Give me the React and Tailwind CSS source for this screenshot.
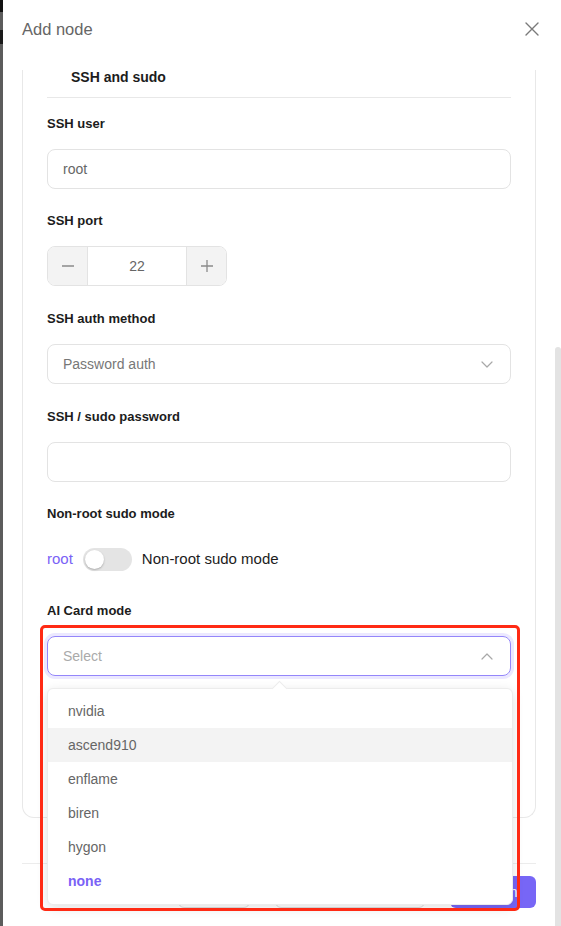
import React from "react";

const font = { fontFamily: '"Liberation Sans", Arial, sans-serif' };

function Label({ children }) {
  return (
    <div className="h-[20px] leading-[20px] text-[13px] font-bold text-[#1c1c1c]">{children}</div>
  );
}

function Field({ label, children, gap = "mb-[22px]" }) {
  return (
    <div className={gap}>
      <Label>{label}</Label>
      <div className="mt-[15px]">{children}</div>
    </div>
  );
}

function TextInput({ value, placeholder }) {
  return (
    <div className="h-[40px] w-full rounded-[8px] border border-[#e3e3e3] bg-white pl-[15px] flex items-center text-[14px]">
      {value ? (
        <span className="text-[#666]">{value}</span>
      ) : (
        <span className="text-[#aaa]">{placeholder}</span>
      )}
    </div>
  );
}

function Chevron({ up }) {
  return (
    <svg width="12" height="7" viewBox="0 0 12 7" fill="none">
      <path
        d={up ? "M1 6L6 1L11 6" : "M1 1L6 6L11 1"}
        stroke="#a8a8a8"
        strokeWidth="1.2"
        strokeLinecap="round"
        strokeLinejoin="round"
      />
    </svg>
  );
}

function NumberInput() {
  return (
    <div className="h-[40px] w-[180px] rounded-[8px] border border-[#e3e3e3] flex overflow-hidden">
      <div className="w-[40px] bg-[#f3f3f3] border-r border-[#e3e3e3] flex items-center justify-center">
        <svg width="14" height="14" viewBox="0 0 14 14">
          <path d="M1 7H13" stroke="#8a8a8a" strokeWidth="1.3" />
        </svg>
      </div>
      <div className="flex-1 flex items-center justify-center text-[14px] text-[#666]">22</div>
      <div className="w-[40px] bg-[#f3f3f3] border-l border-[#e3e3e3] flex items-center justify-center">
        <svg width="14" height="14" viewBox="0 0 14 14">
          <path d="M1 7H13M7 1V13" stroke="#8a8a8a" strokeWidth="1.3" />
        </svg>
      </div>
    </div>
  );
}

const options = ["nvidia", "ascend910", "enflame", "biren", "hygon", "none"];

export default function App() {
  return (
    <div className="w-[561px] h-[926px] relative overflow-hidden bg-white flex" style={font}>
      {/* dimmed backdrop edge */}
      <div className="w-[3px] h-full flex flex-col bg-[#5c5c5c]">
        <div className="h-[12px] bg-[#111]" />
        <div className="h-[18px]" />
        <div className="h-[14px] bg-[#1a1a1a]" />
        <div className="flex-1" />
      </div>

      {/* drawer */}
      <div className="flex-1 flex flex-col">
        <div className="h-[58px] flex items-center justify-between pl-[19px] pr-[22px]">
          <span className="text-[16.5px] text-[#666]">Add node</span>
          <svg width="14" height="14" viewBox="0 0 14 14">
            <path d="M1 1L13 13M13 1L1 13" stroke="#7a7a7a" strokeWidth="1.4" strokeLinecap="round" />
          </svg>
        </div>

        <div className="pl-[19px] pr-[25px] pt-[12px]">
          {/* form card */}
          <div className="border-x border-b border-[#e8e8e8] rounded-b-[12px] px-[24px] pb-[141px]">
            <div className="h-[14px] leading-[14px] pl-[24px] text-[14px] font-bold text-[#1c1c1c]">
              SSH and sudo
            </div>
            <div className="mt-[13px] border-t border-[#e8e8e8] mb-[16px]" />

            <Field label="SSH user">
              <TextInput value="root" />
            </Field>
            <Field label="SSH port" gap="mb-[23px]">
              <NumberInput />
            </Field>
            <Field label="SSH auth method" gap="mb-[23px]">
              <div className="h-[40px] w-full rounded-[8px] border border-[#e3e3e3] pl-[15px] pr-[17px] flex items-center justify-between text-[14px]">
                <span className="text-[#777]">Password auth</span>
                <Chevron />
              </div>
            </Field>
            <Field label="SSH / sudo password">
              <TextInput />
            </Field>
            <Field label="Non-root sudo mode">
              <div className="h-[40px] flex items-center text-[15px]">
                <span className="text-[#7a62f6]">root</span>
                <div className="ml-[10px] w-[49px] h-[23px] rounded-full bg-[#e4e4e4] flex items-center pl-[2px]">
                  <div className="w-[19px] h-[19px] rounded-full bg-white shadow-[0_1px_2px_rgba(0,0,0,0.25)]" />
                </div>
                <span className="ml-[10px] text-[#1c1c1c]">Non-root sudo mode</span>
              </div>
            </Field>
            <Field label="AI Card mode" gap="">
              <div className="h-[40px] w-full rounded-[8px] border border-[#9486fa] ring-[3px] ring-[#ebe8ff] pl-[15px] pr-[17px] flex items-center justify-between text-[14px]">
                <span className="text-[#aaa]">Select</span>
                <Chevron up />
              </div>
            </Field>
          </div>

          {/* footer */}
          <div className="mt-[45px] border-t border-[#ececec] pt-[12px] flex justify-end gap-[25px]">
            <div className="h-[32px] w-[72px] rounded-[6px] border border-[#ddd] bg-white" />
            <div className="h-[32px] w-[150px] rounded-[6px] border border-[#ddd] bg-white" />
            <div className="h-[32px] w-[86px] rounded-[6px] bg-[#7766f6] text-white text-[14px] flex items-center justify-center">
              Confirm
            </div>
          </div>
        </div>
      </div>

      {/* scrollbar */}
      <div className="absolute right-0 top-[347px] bottom-0 w-[6px] rounded-t-[3px] bg-[#e3e3e3]" />

      {/* open option list */}
      <div className="absolute left-[47px] top-[688px] w-[466px] rounded-[6px] bg-white border border-[#ececec] shadow-[0_3px_12px_rgba(0,0,0,0.12)] pt-[5px] pb-[6px]">
        <div className="absolute -top-[6px] left-[226px] w-[11px] h-[11px] rotate-45 bg-white border-l border-t border-[#ececec]" />
        {options.map((o) => (
          <div
            key={o}
            className={
              "relative h-[34px] flex items-center pl-[20px] text-[14px] " +
              (o === "ascend910" ? "bg-[#f3f3f3] " : "") +
              (o === "none" ? "font-bold text-[#7a62f6]" : "text-[#666]")
            }
          >
            {o}
          </div>
        ))}
      </div>

      {/* highlight frame */}
      <div className="absolute left-[40px] top-[625px] w-[480px] h-[286px] rounded-[5px] border-[3px] border-[#ff2a14] pointer-events-none" />
    </div>
  );
}
